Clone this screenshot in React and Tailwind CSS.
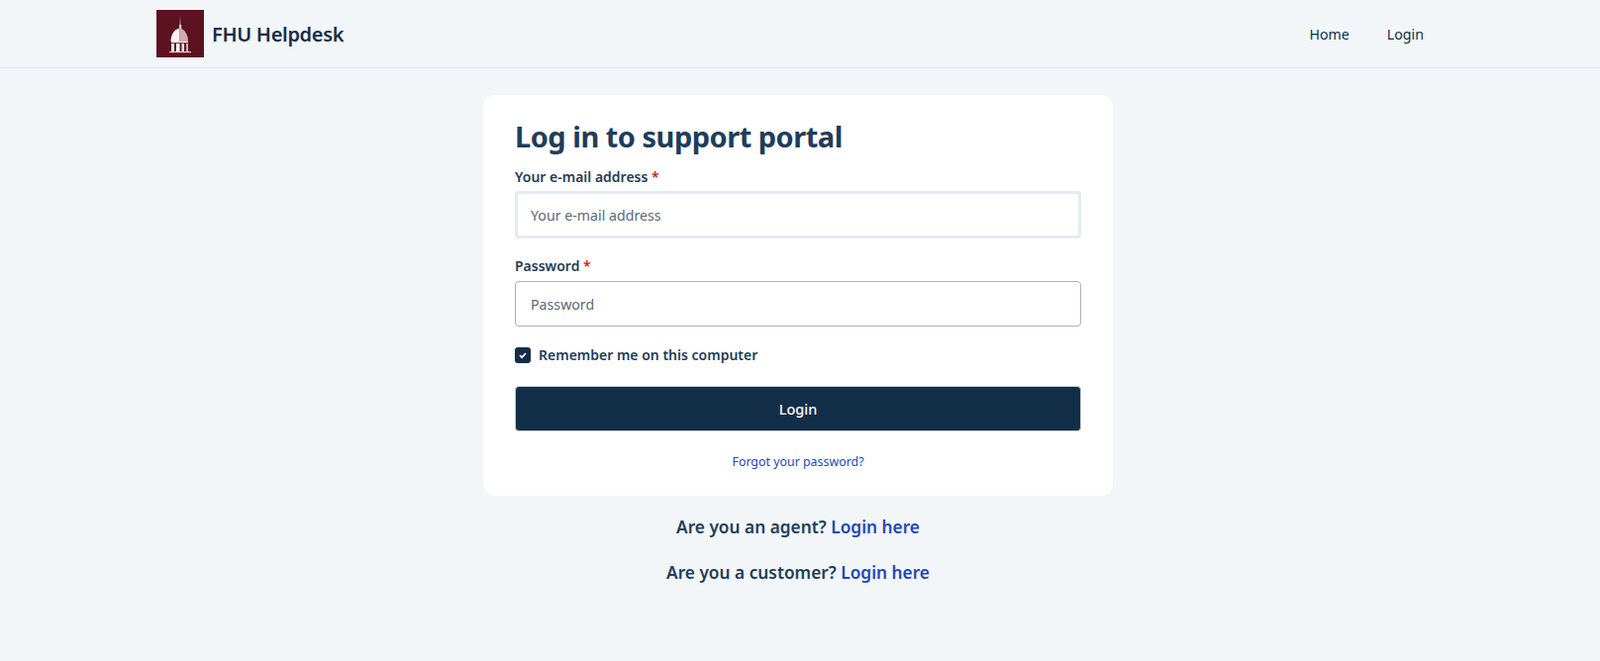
import React from 'react';

const Logo = () => (
  <div className="w-12 h-12 bg-[#5c1220] flex items-center justify-center">
    <svg width="48" height="48" viewBox="0 0 48 48">
      <path d="M24 5l0.700 13h-1.600z" fill="#b98f95" />
      <path d="M23 15h2.200v4H23z" fill="#e3cdd0" />
      <path d="M14.500 32c0-7 3.500-12.500 9-13.500V32z" fill="#fbf3f3" />
      <path d="M23.500 18.500c5 1 8.500 6.500 8.500 13.500h-8.500z" fill="#d5a9ae" />
      <path d="M15 32h17v1.200H15z" fill="#f6e9ea" />
      <path d="M15 34h3v8h-3z" fill="#f3e0e2" />
      <path d="M20 34h3.500v8H20z" fill="#fff" />
      <path d="M25.500 34H28v8h-2.500z" fill="#f3e0e2" />
      <path d="M30 34h2v8h-2z" fill="#d5a9ae" />
      <path d="M13 42h22v1.200H13z" fill="#e6c9cc" />
    </svg>
  </div>
);

const Field = ({ label, placeholder, focused, labelGap }) => (
  <div>
    <label className={`block text-[14px] leading-5 font-semibold text-[#1f3d5a] ${labelGap}`}>
      {label} <span className="text-[#c81e1e]">*</span>
    </label>
    <input
      placeholder={placeholder}
      className={
        focused
          ? 'w-full h-[48px] rounded px-[13px] text-[14.200px] bg-white border-[3px] border-[#e4ebf2] outline-none placeholder:text-[#5d6878]'
          : 'w-full h-[46px] rounded px-[15px] text-[14.200px] bg-white border border-[#a9b2bf] outline-none placeholder:text-[#5d6878]'
      }
    />
  </div>
);

const App = () => {
  return (
    <div className="min-h-[668px] bg-[#f2f6f9] font-['Noto_Sans',sans-serif]">
      <header className="h-[69px] border-b border-[#e5eaef] flex items-center justify-between pl-[158px] pr-[178px]">
        <div className="flex items-center gap-2">
          <Logo />
          <span className="pt-[1px] text-[20px] font-semibold text-[#132e47] tracking-[-0.3px]">FHU Helpdesk</span>
        </div>
        <nav className="flex gap-[38px] pt-[1px] text-[14.200px] text-[#132e47]">
          <a>Home</a>
          <a>Login</a>
        </nav>
      </header>

      <main className="flex flex-col items-center pt-[27px] pr-[4px]">
        <div className="w-[636px] h-[405px] bg-white rounded-xl px-8 pt-[22px]">
          <h1 className="text-[29px] leading-[40px] font-bold text-[#1f3d5a] tracking-[-0.5px] mb-[11px]">Log in to support portal</h1>
          <Field label="Your e-mail address" placeholder="Your e-mail address" focused labelGap="mb-1" />
          <div className="h-[18px]" />
          <Field label="Password" placeholder="Password" labelGap="mb-[5px]" />
          <div className="flex items-center gap-2 mt-[18px]">
            <span className="w-4 h-4 rounded-[3px] bg-[#132e47] flex items-center justify-center">
              <svg width="10" height="10" viewBox="0 0 10 10" fill="none">
                <path d="M2 5.200l2.100 2L8 3" stroke="#fff" strokeWidth="1.700" />
              </svg>
            </span>
            <span className="pt-[1px] text-[14px] leading-5 font-semibold text-[#1f3d5a]">Remember me on this computer</span>
          </div>
          <button className="w-full h-[46px] mt-[21px] pt-[1px] rounded bg-[#132e47] text-white text-[14.500px] font-medium border border-[#c5ced9]">Login</button>
          <p className="text-center mt-[21px] text-[12.400px] leading-5 text-[#1e48b8]"><a>Forgot your password?</a></p>
        </div>
        <p className="mt-[20px] text-[17.300px] leading-[24px] font-semibold text-[#1f3d5a]">Are you an agent? <a className="text-[#1e48b8]">Login here</a></p>
        <p className="mt-[22px] text-[17.300px] leading-[24px] font-semibold text-[#1f3d5a]">Are you a customer? <a className="text-[#1e48b8]">Login here</a></p>
      </main>
    </div>
  );
};

export default App;
